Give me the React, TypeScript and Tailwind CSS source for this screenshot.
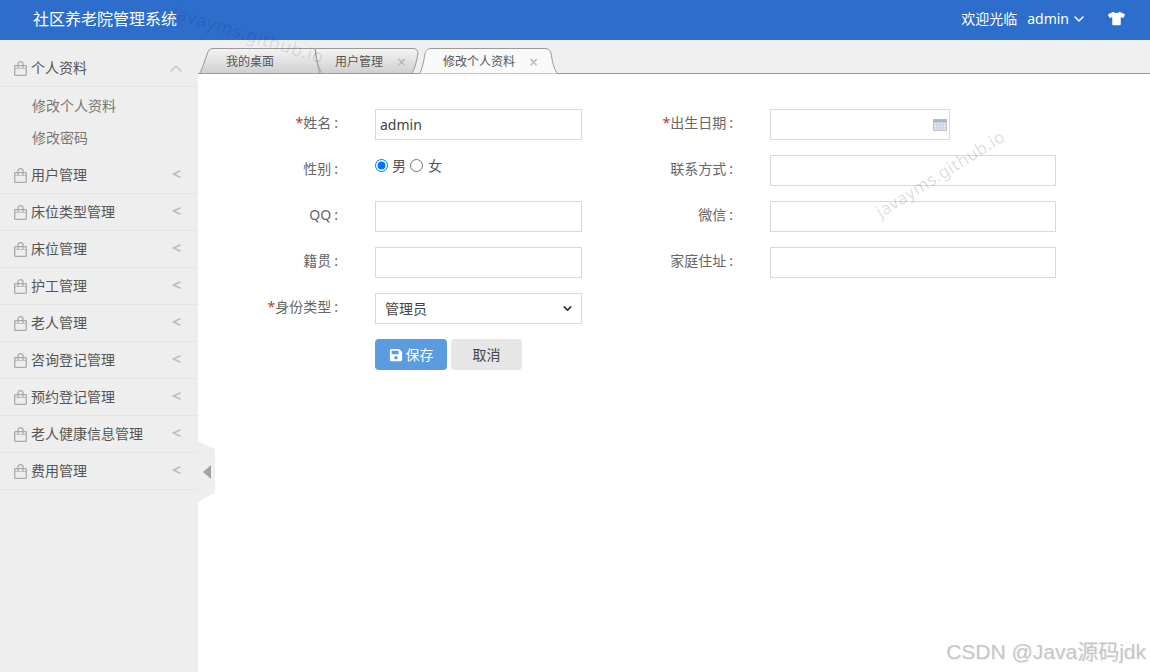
import { ChevronDown } from 'lucide-react';
import { FaSave, FaTshirt } from 'react-icons/fa';

const menus = ['用户管理', '床位类型管理', '床位管理', '护工管理', '老人管理', '咨询登记管理', '预约登记管理', '老人健康信息管理', '费用管理'];

function BagIcon() {
  return (
    <svg width="13" height="15" viewBox="0 0 13 15" fill="none" stroke="#aaaaaa" strokeWidth="1.3" className="shrink-0">
      <rect x="0.7" y="4.7" width="11.6" height="9.6" rx="0.5" />
      <path d="M0.7 7.5H12.3" strokeWidth="0.7" />
      <path d="M4 7V3.2C4 1.6 5 0.7 6.5 0.7S9 1.6 9 3.2V7" />
    </svg>
  );
}

function MenuItem({ label, open }: { label: string; open?: boolean }) {
  return (
    <div className="flex h-[37px] items-center border-b border-[#e5e5e5] pl-[14px] pr-[16px] text-[#555555]">
      <BagIcon />
      <span className="ml-1 flex-1 text-sm">{label}</span>
      {open ? (
        <svg width="12" height="7" viewBox="0 0 12 7" fill="none" stroke="#c4c4c4" strokeWidth="1.4">
          <path d="M0.7 6.3L6 1.2L11.3 6.3" />
        </svg>
      ) : (
        <svg width="9" height="8" viewBox="0 0 9 8" fill="none" stroke="#bdbdbd" strokeWidth="1.5" className="mr-px -mt-[3px]">
          <path d="M8.5 0.8L1.5 4L8.5 7.2" />
        </svg>
      )}
    </div>
  );
}

function Tab({ width, path, fill, label, close, className }: { width: number; path: string; fill: string; label: string; close?: boolean; className: string }) {
  return (
    <div className={`relative flex h-[26px] shrink-0 items-center ${className}`}>
      <svg width={width} height="26" viewBox={`0 0 ${width} 26`} className="absolute left-0 top-0">
        <defs>
          <linearGradient id="tabGrey" x1="0" y1="0" x2="0" y2="1">
            <stop offset="0" stopColor="#f4f4f4" />
            <stop offset="1" stopColor="#cfcfcf" />
          </linearGradient>
        </defs>
        <path d={path} fill={fill} stroke="#999999" strokeWidth="1" />
      </svg>
      <span className="relative pt-[2px] text-xs text-[#555555]">{label}</span>
      {close && <span className="relative ml-[14px] pt-px text-base leading-none text-[#b5b5b5]">×</span>}
    </div>
  );
}

function Label({ text, required }: { text: string; required?: boolean }) {
  return (
    <label className="pt-[4px] text-right text-sm leading-5 text-[#666666]">
      {required && <span className="text-[#c0392b]">*</span>}
      {text}
      <span className="ml-[3px]">:</span>
    </label>
  );
}

function Field({ defaultValue }: { defaultValue?: string }) {
  return <input defaultValue={defaultValue} className="h-[31px] w-full border border-[#d9d9d9] bg-white px-1 text-sm text-[#444444] outline-none" />;
}

export default function App() {
  return (
    <div className="relative flex h-screen w-full flex-col overflow-hidden bg-white font-['Noto_Sans','Noto_Sans_CJK_SC',sans-serif]">
      <header className="flex h-10 shrink-0 items-center bg-[#2d6dcc] pb-[3px] pl-[33px] pr-[25px] text-white">
        <h1 className="flex-1 text-base font-normal">社区养老院管理系统</h1>
        <span className="text-sm">欢迎光临</span>
        <span className="ml-[10px] text-sm">admin</span>
        <ChevronDown size={16} strokeWidth={2.2} className="ml-[2px]" />
        <FaTshirt size={17} className="ml-[21px]" />
      </header>

      <div className="flex min-h-0 flex-1">
        <aside className="w-[198px] shrink-0 bg-[#eeeeee] pt-[10px]">
          <MenuItem label="个人资料" open />
          <div className="h-[70px] pt-[3px] text-sm text-[#777777]">
            <div className="flex h-8 items-center pl-8">修改个人资料</div>
            <div className="flex h-8 items-center pl-8">修改密码</div>
          </div>
          {menus.map((m) => (
            <MenuItem key={m} label={m} />
          ))}
        </aside>

        <main className="relative min-w-0 flex-1">
          <div className="flex h-[34px] items-end border-b border-[#999999] bg-[#efefef] pl-px">
            <Tab
              width={122}
              className="-mb-px w-[122px] pl-[27px]"
              fill="url(#tabGrey)"
              label="我的桌面"
              path="M0.5 25.5C2 24 3 20 5 15L8.5 5C9.5 2 11 0.5 14 0.5H116C117 8 119 20 121 25.5Z"
            />
            <Tab
              width={105}
              close
              className="-mb-px -ml-[6px] w-[105px] pl-5"
              fill="url(#tabGrey)"
              label="用户管理"
              path="M0.5 0.5H98C101 0.5 103 2 103 5C102 12 100 20 97 25.5H7C3 20 1 10 0.5 0.5Z"
            />
            <Tab
              width={139}
              close
              className="-mb-px -ml-[1px] w-[139px] pl-[24px]"
              fill="#f9f9f9"
              label="修改个人资料"
              path="M0.5 25.5C3 22 5 12 6 6C7 2 9 0.5 12 0.5H126C129 0.5 131 2 132 5C133 12 135 22 138.5 25.5"
            />
          </div>

          <form className="mt-[35px] grid grid-cols-[140px_207px_114px_286px] auto-rows-[31px] gap-x-[37px] gap-y-[15px]">
            <Label text="姓名" required />
            <Field defaultValue="admin" />
            <Label text="出生日期" required />
            <div className="relative w-[180px]">
              <Field />
              <svg width="14" height="12" viewBox="0 0 14 12" className="absolute right-[3px] top-[10px]">
                <rect x="0.5" y="0.5" width="13" height="11" fill="#e4e8f0" stroke="#b8c0cf" />
                <rect x="0.5" y="0.5" width="13" height="3" fill="#a8b5ca" />
                <path d="M0 6H14M0 9H14M4 4V12M7 4V12M10 4V12" stroke="#b8c0cf" strokeWidth="0.6" />
              </svg>
            </div>

            <Label text="性别" />
            <div className="flex items-start pt-px text-sm leading-5 text-[#555555]">
              <input type="radio" name="sex" defaultChecked className="mt-[3px] size-[13px]" />
              <span className="ml-[4px]">男</span>
              <input type="radio" name="sex" className="ml-[4px] mt-[3px] size-[13px]" />
              <span className="ml-[5px]">女</span>
            </div>
            <Label text="联系方式" />
            <Field />

            <Label text="QQ" />
            <Field />
            <Label text="微信" />
            <Field />

            <Label text="籍贯" />
            <Field />
            <Label text="家庭住址" />
            <Field />

            <Label text="身份类型" required />
            <div className="relative">
              <select className="h-[31px] w-full appearance-none border border-[#d9d9d9] bg-white px-[9px] text-sm text-[#444444] outline-none">
                <option>管理员</option>
              </select>
              <ChevronDown size={13} strokeWidth={3} className="pointer-events-none absolute right-[8px] top-[9px] text-[#333333]" />
            </div>
            <div className="col-span-2" />

            <div className="col-span-3 col-start-2 flex gap-1">
              <button type="button" className="flex h-[31px] w-[72px] items-center justify-center gap-[3px] rounded bg-[#5b9bdf] text-sm text-white">
                <FaSave size={14} />
                保存
              </button>
              <button type="button" className="h-[31px] w-[71px] rounded bg-[#e6e6e6] text-sm text-[#444444]">
                取消
              </button>
            </div>
          </form>

          <div className="absolute left-0 top-[401px] flex h-[61px] w-[17px] items-center justify-center bg-[#eeeeee] [clip-path:polygon(0_0,100%_13%,100%_85%,0_100%)]">
            <div className="h-0 w-0 border-y-[7px] border-r-[8px] border-y-transparent border-r-[#a3a3a3]" />
          </div>
        </main>
      </div>

      <span className="pointer-events-none absolute left-[170px] top-[20px] rotate-[17deg] text-lg tracking-wide text-black/10">javayms.github.io</span>
      <span className="pointer-events-none absolute left-[866px] top-[161px] -rotate-[32deg] text-[17px] tracking-wide text-black/15">javayms.github.io</span>
      <span className="pointer-events-none absolute bottom-[5px] right-[4px] font-['Liberation_Sans','Noto_Sans_CJK_SC',sans-serif] text-[21px] text-[#c6c6c6] [text-shadow:1px_1px_1px_#eeeeee]">CSDN @Java源码jdk</span>
    </div>
  );
}
